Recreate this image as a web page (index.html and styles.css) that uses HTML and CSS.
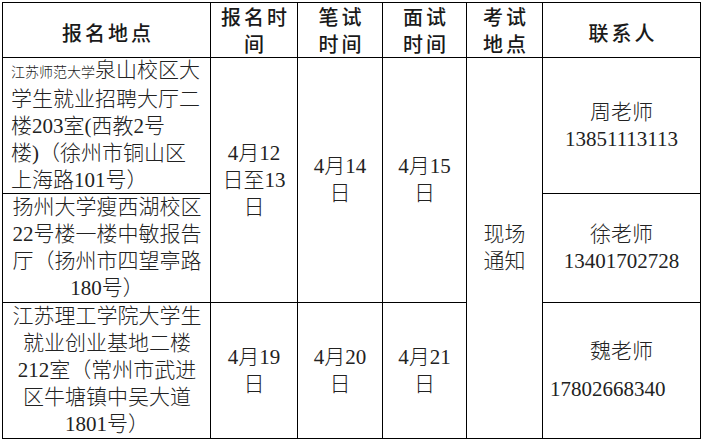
FILE: index.html
```html
<!DOCTYPE html>
<html lang="zh-CN">
<head>
<meta charset="utf-8">
<title>报名地点</title>
<link rel="stylesheet" href="styles.css">
</head>
<body>
<div class="sheet">
  <div class="cell head wide">报名地点</div>
  <div class="cell head">报名时<br>间</div>
  <div class="cell head">笔试<br>时间</div>
  <div class="cell head">面试<br>时间</div>
  <div class="cell head">考试<br>地点</div>
  <div class="cell head wide">联系人</div>

  <div class="cell addr left"><div><span class="small">江苏师范大学</span>泉山校区大学生就业招聘大厅二楼203室(西教2号<br>楼)（徐州市铜山区上海路101号）</div></div>
  <div class="cell span2">4月12<br>日至13<br>日</div>
  <div class="cell span2">4月14<br>日</div>
  <div class="cell span2">4月15<br>日</div>
  <div class="cell span3">现场<br>通知</div>
  <div class="cell">周老师<br>13851113113</div>

  <div class="cell addr"><div>扬州大学瘦西湖校区22号楼一楼中敏报告厅（扬州市四望亭路180号）</div></div>
  <div class="cell">徐老师<br>13401702728</div>

  <div class="cell addr"><div>江苏理工学院大学生就业创业基地二楼212室（常州市武进区牛塘镇中吴大道1801号）</div></div>
  <div class="cell">4月19<br>日</div>
  <div class="cell">4月20<br>日</div>
  <div class="cell">4月21<br>日</div>
  <div class="cell">魏老师<div class="phone">17802668340</div></div>
</div>
</body>
</html>
```

FILE: styles.css
```css
html, body {
  margin: 0;
  padding: 0;
  background: #fff;
}

.sheet {
  box-sizing: border-box;
  margin: 2px 0 0 2px;
  width: 699px;
  display: grid;
  grid-template-columns: 207px 86px 84px 83px 75px 157px;
  grid-template-rows: 54px 135px 108px 135px;
  gap: 1px;
  background: #000;
  border: 1px solid #000;
  font-family: "Liberation Serif", "Noto Sans CJK SC", serif;
  font-size: 21px;
  line-height: 27px;
  font-weight: 300;
  color: #222;
}

.cell {
  background: #fff;
  display: flex;
  flex-direction: column;
  justify-content: center;
  text-align: center;
  overflow: hidden;
}

.head {
  font-family: "Noto Sans CJK SC", sans-serif;
  font-size: 20px;
  font-weight: 500;
  letter-spacing: 3px;
  padding-left: 3px;
  line-height: 27px;
  color: #1a1a1a;
}

.head.wide {
  padding-top: 4px;
}

.addr {
  padding: 0 7px 0 8px;
}

.left {
  text-align: left;
}

.small {
  font-size: 14px;
}

.span2 {
  grid-row: span 2;
}

.span3 {
  grid-row: span 3;
}

.phone {
  margin-top: 11px;
  text-align: left;
  padding-left: 7px;
}
```
